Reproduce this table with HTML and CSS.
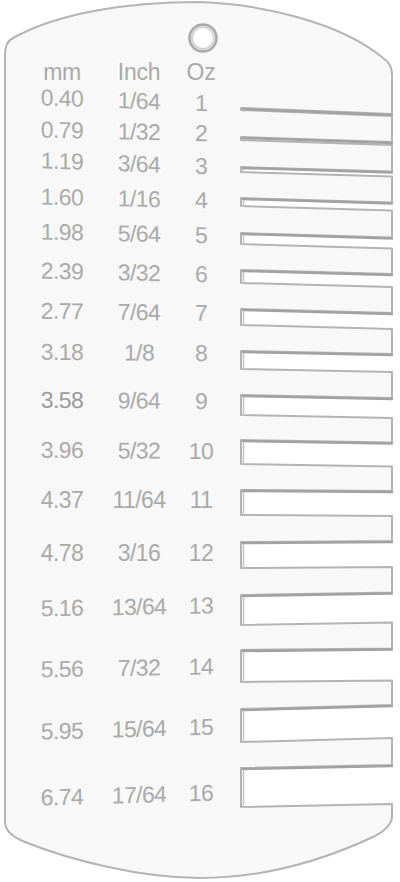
FILE: index.html
```html
<!DOCTYPE html>
<html lang="en">
<head>
  <meta charset="UTF-8" />
  <meta name="viewport" content="width=device-width, initial-scale=1.0"/>
  <title>Leather Thickness Gauge</title>
  <link rel="stylesheet" href="styles.css">
</head>
<body>
  <div class="gauge">
    <!-- acrylic card outline, hanging hole and the 16 slots -->
    <svg class="card" viewBox="0 0 400 882" width="400" height="882">
      <path class="body" d="M5,54 Q5,42 13,38 C60,12 130,2 200,2 C260,4 340,22 383,58 Q392,64 392,74
        V114 L241,108 L241,110 L392,116
        V142 L241,137 L241,140 L392,145
        V171.5 L241,167 L241,172 L392,176.5
        V202.5 L241,198 L241,206 L392,210.5
        V237.5 L241,233 L241,244 L392,248.5
        V274 L241,270 L241,283 L392,287
        V313 L241,309 L241,325 L392,329
        V354 L241,351 L241,369 L392,372
        V398 L241,395 L241,415 L392,418
        V442.5 L241,440 L241,464 L392,466.5
        V491 L241,490 L241,515 L392,516
        V541 L241,542 L241,568 L392,567
        V592.5 L241,595 L241,625 L392,622.5
        V648.5 L241,650 L241,682 L392,680.5
        V705 L241,709 L241,742 L392,738
        V765 L241,768 L241,807 L392,804
        V815 Q393,826 375,836 C320,862 260,878 200,878 C140,878 70,860 25,842 Q5,834 5,822 Z"/>
      <g class="shade">
        <path d="M243,109 L392,115"/>
        <path d="M243,138 L392,143"/>
        <path d="M243,168 L392,172.5"/>
        <path d="M243,199 L392,203.5"/>
        <path d="M243,234 L392,238.5"/>
        <path d="M243,271 L392,275"/>
        <path d="M243,310 L392,314"/>
        <path d="M243,352 L392,355"/>
        <path d="M243,396 L392,399"/>
        <path d="M243,441 L392,443.5"/>
        <path d="M243,491 L392,492"/>
        <path d="M243,543 L392,542"/>
        <path d="M243,596 L392,593.5"/>
        <path d="M243,651 L392,649.5"/>
        <path d="M243,710 L392,706"/>
        <path d="M243,769 L392,766"/>
      </g>
      <g class="edges">
        <path d="M243.5,110 V112"/>
        <path d="M243.5,139 V142"/>
        <path d="M243.5,169 V173"/>
        <path d="M243.5,200 V207"/>
        <path d="M243.5,235 V245"/>
        <path d="M243.5,272 V284"/>
        <path d="M243.5,311 V326"/>
        <path d="M243.5,353 V370"/>
        <path d="M243.5,397 V416"/>
        <path d="M243.5,442 V465"/>
        <path d="M243.5,492 V516"/>
        <path d="M243.5,544 V569"/>
        <path d="M243.5,597 V626"/>
        <path d="M243.5,652 V683"/>
        <path d="M243.5,711 V743"/>
        <path d="M243.5,770 V808"/>
      </g>
      <circle class="hole" cx="203" cy="38" r="13.5"/>
      <circle class="hole-in" cx="203" cy="38" r="11"/>
    </svg>

    <div class="scale">
      <div class="row head"><span>mm</span><span>Inch</span><span>Oz</span></div>
      <div class="row t5"><span>0.40</span><span>1/64</span><span>1</span></div>
      <div class="row t3"><span>0.79</span><span>1/32</span><span>2</span></div>
      <div class="row t5"><span>1.19</span><span>3/64</span><span>3</span></div>
      <div class="row t3"><span>1.60</span><span>1/16</span><span>4</span></div>
      <div class="row t3"><span>1.98</span><span>5/64</span><span>5</span></div>
      <div class="row t3"><span>2.39</span><span>3/32</span><span>6</span></div>
      <div class="row t2"><span>2.77</span><span>7/64</span><span>7</span></div>
      <div class="row t1"><span>3.18</span><span>1/8</span><span>8</span></div>
      <div class="row t1"><span class="dark">3.58</span><span>9/64</span><span>9</span></div>
      <div class="row t1"><span>3.96</span><span>5/32</span><span>10</span></div>
      <div class="row"><span>4.37</span><span>11/64</span><span>11</span></div>
      <div class="row"><span>4.78</span><span>3/16</span><span>12</span></div>
      <div class="row tm2"><span>5.16</span><span>13/64</span><span>13</span></div>
      <div class="row tm2"><span>5.56</span><span>7/32</span><span>14</span></div>
      <div class="row tm4"><span>5.95</span><span>15/64</span><span>15</span></div>
      <div class="row tm4"><span>6.74</span><span>17/64</span><span>16</span></div>
    </div>
  </div>
</body>
</html>
```

FILE: styles.css
```css
body {
  margin: 0;
  background: #ffffff;
  font-family: "Liberation Sans", Arial, sans-serif;
}
.gauge {
  position: relative;
  width: 400px;
  height: 882px;
  overflow: hidden;
}
.card {
  position: absolute;
  top: 0;
  left: 0;
}
.card .body {
  fill: #f8f8f8;
  stroke: #b4b4b4;
  stroke-width: 2;
  stroke-linejoin: round;
}
.card .shade path {
  fill: none;
  stroke: #a2a2a2;
  stroke-width: 2.5;
  stroke-linecap: round;
}
.card .edges path {
  fill: none;
  stroke: #c4c4c4;
  stroke-width: 1.5;
}
.card .hole {
  fill: #ffffff;
  stroke: #a8a8a8;
  stroke-width: 2.5;
}
.card .hole-in {
  fill: none;
  stroke: #d2d2d2;
  stroke-width: 2;
}

/* one grid track per printed line, spaced like the card */
.scale {
  position: relative;
  display: grid;
  grid-template-rows: 26px 32px 31px 36px 35px 39px 40px 41px 48px 50px 50px 53px 55px 61px 62px 66px 24px;
  padding: 60px 0 0 22px;
  color: #aaaaaa;
  font-size: 23px;
  line-height: 24px;
  letter-spacing: -0.6px;
}
.row {
  display: grid;
  grid-template-columns: 80px 74px 50px;
  width: 204px;
  text-align: center;
  transform-origin: 40px 50%;
}
.head {
  letter-spacing: -0.3px;
}
.row.t5 { transform: skewY(2.1deg); }
.row.t3 { transform: skewY(1.25deg); }
.row.t2 { transform: skewY(0.8deg); }
.row.t1 { transform: skewY(0.4deg); }
.row.tm2 { transform: skewY(-1deg); }
.row.tm4 { transform: skewY(-1.65deg); }
.dark {
  color: #9a9a9a;
}
```
